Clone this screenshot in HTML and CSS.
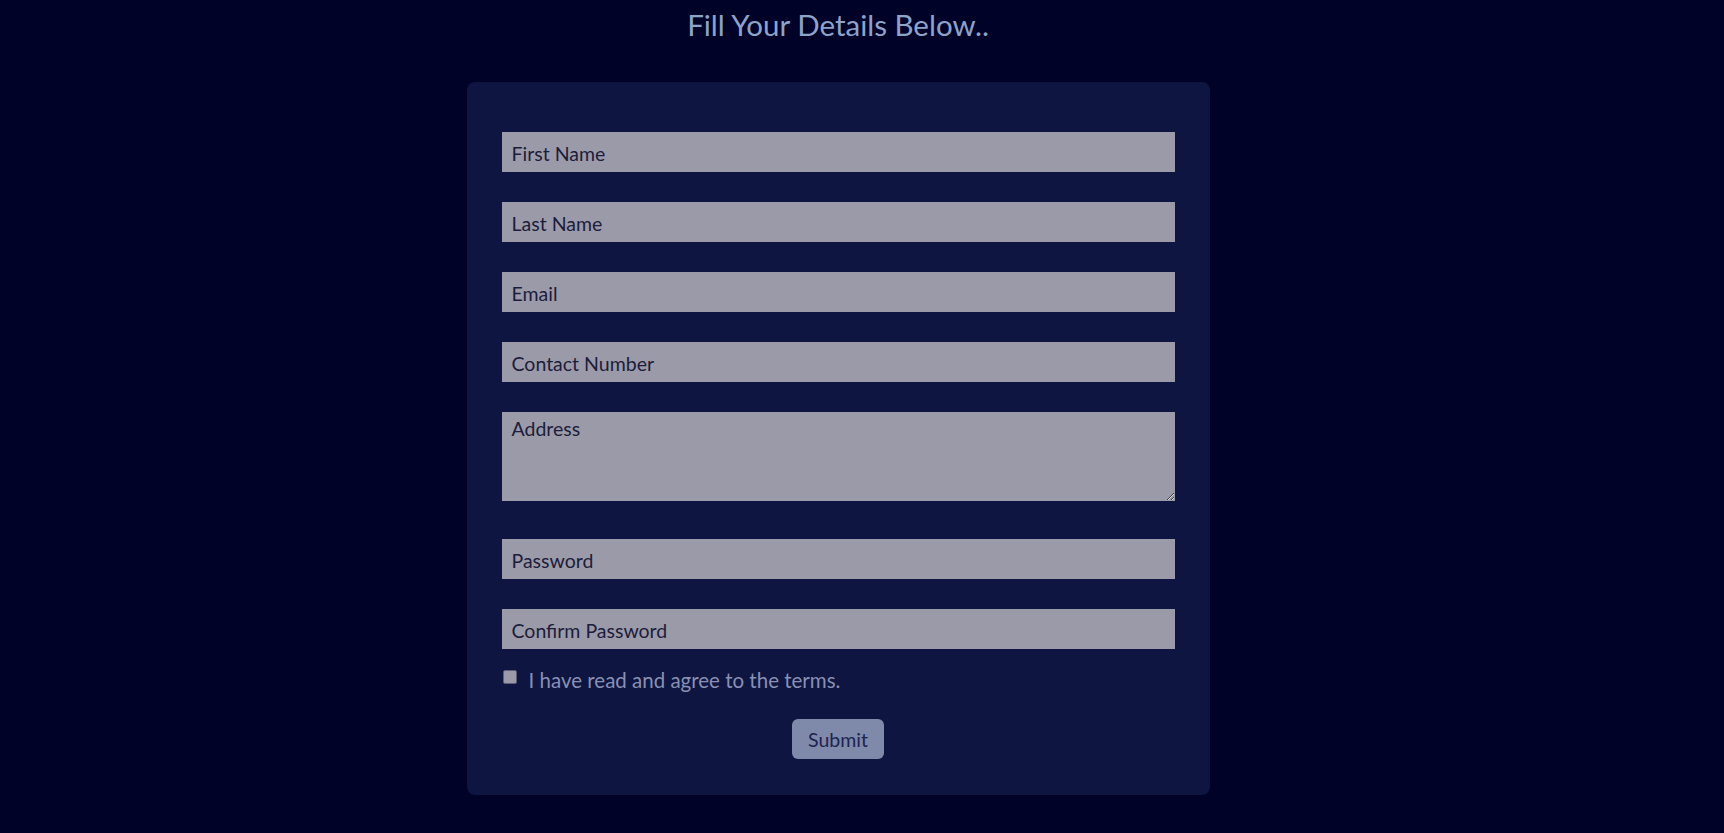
FILE: index.html
```html
<!DOCTYPE html>
<html lang="en">
<head>
<meta charset="utf-8">
<title>Fill Your Details</title>
<link rel="stylesheet" href="styles.css">
</head>
<body>
<div class="page">
  <h1 class="title">Fill Your Details Below..</h1>
  <div class="card">
    <form class="form">
      <input class="field" type="text" placeholder="First Name">
      <input class="field" type="text" placeholder="Last Name">
      <input class="field" type="email" placeholder="Email">
      <input class="field" type="tel" placeholder="Contact Number">
      <textarea class="field area" placeholder="Address"></textarea>
      <input class="field" type="password" placeholder="Password">
      <input class="field" type="password" placeholder="Confirm Password">
      <label class="terms"><input class="check" type="checkbox"><span>I have read and agree to the terms.</span></label>
      <div class="actions"><button class="submit" type="button">Submit</button></div>
    </form>
  </div>
</div>
</body>
</html>
```

FILE: styles.css
```css
html, body {
  margin: 0;
  padding: 0;
  background: #000228;
  height: 100%;
}
body {
  font-family: "Lato", "Noto Sans", sans-serif;
}
.page {
  width: 1676px;
  display: flex;
  flex-direction: column;
  align-items: center;
}
.title {
  margin: 5px 0 0;
  font-size: 29.5px;
  font-weight: 400;
  line-height: 40px;
  color: #8ea3c8;
}
.card {
  margin-top: 37px;
  width: 743px;
  box-sizing: border-box;
  padding: 50px 35px 36px;
  background: #0e1541;
  border-radius: 8px;
}
.form {
  display: flex;
  flex-direction: column;
}
.field {
  box-sizing: border-box;
  width: 100%;
  height: 40px;
  margin: 0 0 30px;
  padding: 2px 10px 0;
  border: none;
  outline: none;
  background: #9b9aa8;
  color: #1b1d3b;
  font-family: inherit;
  font-size: 19.5px;
}
.field::placeholder {
  color: #1b1d3b;
  opacity: 1;
}
.area {
  height: 89px;
  padding-top: 5px;
  margin-bottom: 38px;
  resize: vertical;
}
.terms {
  display: flex;
  align-items: center;
  gap: 12px;
  margin-top: -11px;
  color: #8990b3;
  font-size: 20.5px;
}
.check {
  appearance: none;
  -webkit-appearance: none;
  margin: -6px 0 0 1px;
  width: 14px;
  height: 14px;
  box-sizing: border-box;
  border: 1px solid #5c5e78;
  border-radius: 2px;
  background: #9b9aa8;
}
.actions {
  display: flex;
  justify-content: center;
  margin-top: 27px;
}
.submit {
  width: 92px;
  height: 40px;
  border: none;
  border-radius: 6px;
  background: #7f89aa;
  color: #1c2450;
  font-family: inherit;
  font-size: 19.5px;
  cursor: pointer;
}
```
